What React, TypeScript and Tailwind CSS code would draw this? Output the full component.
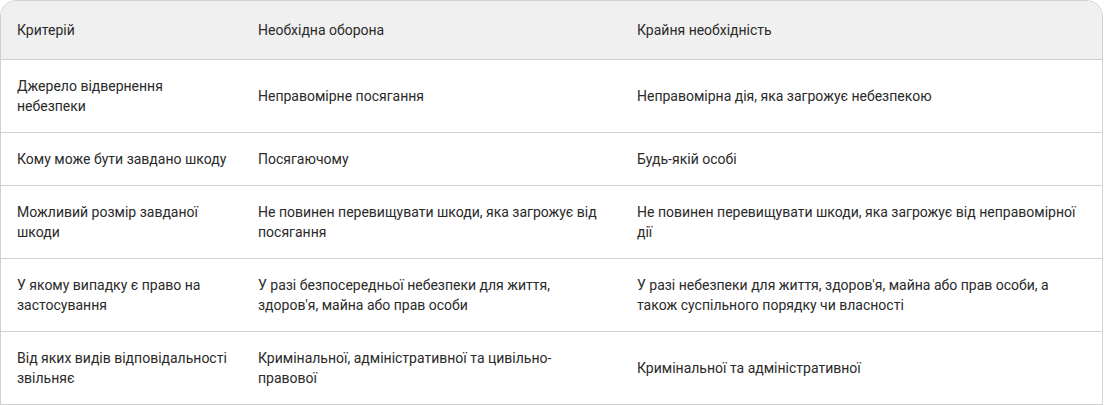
const rows: [string, string, string][] = [
  ["Джерело відвернення небезпеки", "Неправомірне посягання", "Неправомірна дія, яка загрожує небезпекою"],
  ["Кому може бути завдано шкоду", "Посягаючому", "Будь-якій особі"],
  [
    "Можливий розмір завданої шкоди",
    "Не повинен перевищувати шкоди, яка загрожує від посягання",
    "Не повинен перевищувати шкоди, яка загрожує від неправомірної дії",
  ],
  [
    "У якому випадку є право на застосування",
    "У разі безпосередньої небезпеки для життя, здоров'я, майна або прав особи",
    "У разі небезпеки для життя, здоров'я, майна або прав особи, а також суспільного порядку чи власності",
  ],
  [
    "Від яких видів відповідальності звільняє",
    "Кримінальної, адміністративної та цивільно-правової",
    "Кримінальної та адміністративної",
  ],
]

export default function App() {
  return (
    <div className="bg-white w-[1106px] h-[405px] overflow-hidden font-['Roboto',sans-serif] text-[14px] leading-5 text-[#2a2a2a]">
      <div className="w-[1103px] border border-[#d0d0d0] rounded-t-2xl overflow-hidden">
        <table className="w-full border-collapse table-fixed">
          <colgroup>
            <col className="w-[241px]" />
            <col className="w-[379px]" />
            <col />
          </colgroup>
          <thead>
            <tr className="bg-[#f0f0f0] border-b border-[#d0d0d0]">
              <th className="text-left font-normal pl-4 pr-2 py-[19px]">Критерій</th>
              <th className="text-left font-normal px-4 py-[19px]">Необхідна оборона</th>
              <th className="text-left font-normal px-4 py-[19px]">Крайня необхідність</th>
            </tr>
          </thead>
          <tbody>
            {rows.map((r, i) => (
              <tr key={i} className="border-b border-[#d0d0d0]">
                <td className="align-middle pl-4 pr-2 py-4">{r[0]}</td>
                <td className="align-middle px-4 py-4">{r[1]}</td>
                <td className="align-middle px-4 py-4">{r[2]}</td>
              </tr>
            ))}
          </tbody>
        </table>
      </div>
    </div>
  )
}
